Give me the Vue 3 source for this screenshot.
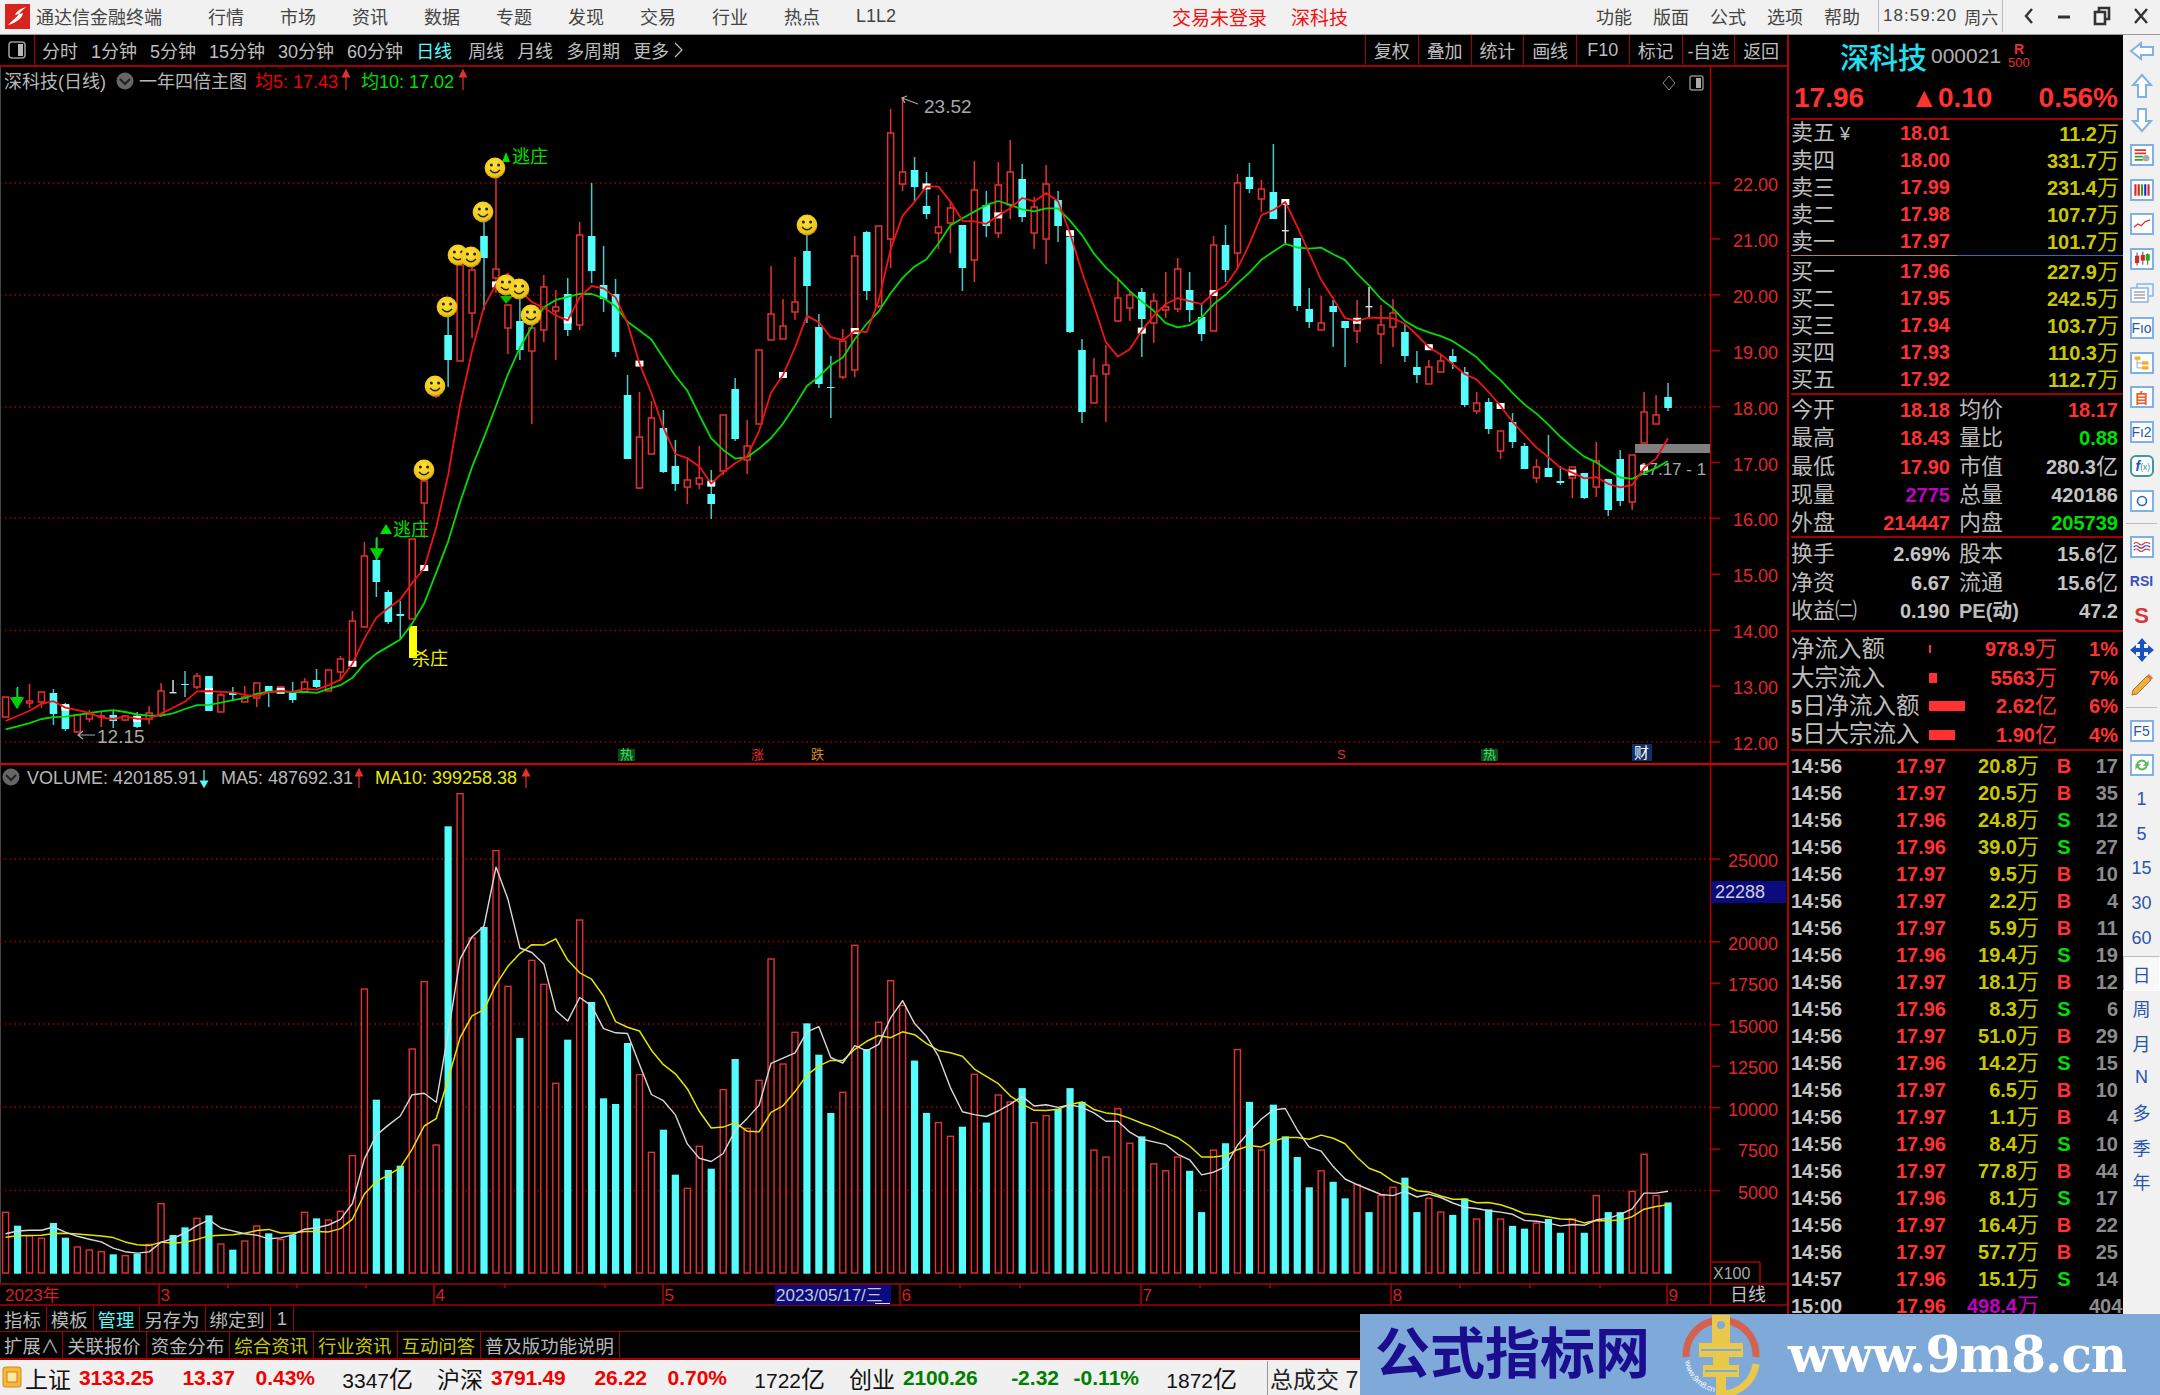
<template>
  <div class="app">
    <div class="menubar">
      <svg class="logo" viewBox="0 0 25 25" width="25" height="25">
        <rect width="25" height="25" fill="#d9231f" />
        <path d="M21 3 C15 5 12 7 10 11 L14 10 C12 13 8 16 3 21 C10 19 17 15 18 9 L14 10 C16 7 19 5 21 3Z" fill="#fff" />
      </svg>
      <span class="app-title">通达信金融终端</span>
      <div class="menu-items">
        <span v-for="m in menus" :key="m">{{ m }}</span>
      </div>
      <span class="login">交易未登录</span>
      <span class="login-stock">深科技</span>
      <div class="menu-right">
        <span v-for="m in rightMenus" :key="m">{{ m }}</span>
      </div>
      <div class="clock"><span class="clock-time">18:59:20</span><span>周六</span></div>
      <div class="win-btns">
        <svg width="12" height="20" viewBox="0 0 12 20"><path d="M9 3 L3 10 L9 17" fill="none" stroke="#333" stroke-width="2.4" /></svg>
        <svg width="14" height="20" viewBox="0 0 14 20"><path d="M1 11h12" stroke="#333" stroke-width="3" /></svg>
        <svg width="18" height="20" viewBox="0 0 18 20"><path d="M6 5V2h10v11h-4M2 6h10v12H2z" fill="none" stroke="#333" stroke-width="2.6" /></svg>
        <svg width="16" height="20" viewBox="0 0 16 20"><path d="M2 3 L14 17 M14 3 L2 17" stroke="#333" stroke-width="2.4" /></svg>
      </div>
    </div>

    <div class="body">
      <div class="left">
        <div class="toolbar">
          <div class="tb-icon">
            <svg width="18" height="18" viewBox="0 0 18 18">
              <rect x="1" y="1" width="16" height="16" rx="3" fill="none" stroke="#999" stroke-width="1.6" />
              <rect x="10" y="3" width="5" height="12" fill="#bbb" />
            </svg>
          </div>
          <span v-for="t in periods" :key="t" class="tb-item" :class="{ active: t === '日线' }">{{ t }}</span>
          <span class="tb-item">更多</span>
          <svg class="tb-more" width="9" height="16" viewBox="0 0 9 16"><path d="M1 1 L8 8 L1 15" fill="none" stroke="#bdbdbd" stroke-width="1.3" /></svg>
          <div class="tb-right">
            <span v-for="b in tbButtons" :key="b">{{ b }}</span>
          </div>
        </div>

        <svg class="pane" viewBox="0 67 1787 696" width="1787" height="696">
          <defs>
            <radialGradient id="smile" cx="45%" cy="35%" r="70%">
              <stop offset="0%" stop-color="#ffe23a" />
              <stop offset="75%" stop-color="#efc416" />
              <stop offset="100%" stop-color="#a88410" />
            </radialGradient>
          </defs>
          <line v-for="y in priceGrid" :key="y" x1="0" :y1="y" x2="1710" :y2="y" class="dots" />
          <line x1="0.5" y1="67" x2="0.5" y2="763" stroke="#444" />
          <line x1="1710.5" y1="67" x2="1710.5" y2="763" class="axis" />
          <g v-for="t in priceTicks" :key="t.label">
            <line x1="1711" :y1="t.y" x2="1720" :y2="t.y" class="axis" />
            <text x="1778" :y="t.y + 8" text-anchor="end" class="axis-text">{{ t.label }}</text>
          </g>

          <text x="1639" y="475" class="gray-text mid">17.17 - 1</text>

          <g v-for="c in candles" :key="c.i">
            <line v-if="c.type !== 'c'" :x1="c.x" :y1="c.hi" :x2="c.x" :y2="c.top" :class="'wick-' + c.type" />
            <line v-if="c.type !== 'c'" :x1="c.x" :y1="c.bot" :x2="c.x" :y2="c.lo" :class="'wick-' + c.type" />
            <line v-if="c.type === 'c'" :x1="c.x" :y1="c.hi" :x2="c.x" :y2="c.lo" class="wick-c" />
            <rect v-if="c.type === 'c'" :x="c.x - 3.8" :y="c.top" width="7.6" :height="c.bot - c.top" fill="#54fcfc" />
            <rect v-else-if="c.type === 'r'" :x="c.x - 3" :y="c.top" width="6" :height="c.bot - c.top" fill="#000" stroke="#e83030" stroke-width="1.5" />
            <rect v-else :x="c.x - 3.5" :y="c.top" width="7" height="1.4" fill="#ddd" />
          </g>

          <rect x="409" y="626" width="8" height="32" fill="#ffff00" />
          <rect x="1635" y="444" width="75" height="9" fill="#808080" />
          <rect v-for="m in ma5Marks" :key="m.x" :x="m.x - 4" :y="m.y - 3" width="8" height="6" fill="#fff" />
          <polyline :points="mainMa10" class="ma-green" />
          <polyline :points="mainMa5" class="ma-red" />

          <!-- signal marks -->
          <path d="M17 688v10M11 698h12l-6 10z" fill="#00d000" stroke="#00d000" stroke-width="1.4" />
          <path d="M377 537v12M371 549h12l-6 10z" fill="#00d000" stroke="#00d000" stroke-width="1.4" />
          <polygon points="380,534 392,534 386,524" fill="#00e000" />
          <polygon points="502,162 510,162 506,152" fill="#00e000" />
          <polygon points="500,296 513,296 506,304" fill="#00c000" />
          <text x="393" y="536" class="sig-green">逃庄</text>
          <text x="512" y="163" class="sig-green">逃庄</text>
          <text x="412" y="665" class="sig-yellow">杀庄</text>

          <g v-for="s in smileys" :key="s[0]" :transform="`translate(${s[0]} ${s[1]})`">
            <circle r="10.4" fill="url(#smile)" />
            <circle cx="-3.6" cy="-3" r="1.5" fill="#222" />
            <circle cx="3.6" cy="-3" r="1.5" fill="#222" />
            <path d="M-5 2 Q0 7.5 5 2" fill="none" stroke="#222" stroke-width="1.4" />
          </g>

          <!-- extreme prices -->
          <path d="M918 104 L902 98 M907 96 L902 98 L905 103" fill="none" stroke="#aaa" stroke-width="1.2" />
          <text x="924" y="113" class="gray-text">23.52</text>
          <path d="M95 735 H78 M83 731 L78 735 L83 739" fill="none" stroke="#aaa" stroke-width="1.2" />
          <text x="97" y="743" class="gray-text">12.15</text>

          <!-- legend -->
          <text x="4" y="88" class="legend gray">深科技(日线)</text>
          <circle cx="125" cy="81" r="8.5" fill="#666" />
          <path d="M120 79 L125 84 L130 79" fill="none" stroke="#222" stroke-width="2" />
          <text x="139" y="88" class="legend gray">一年四倍主图</text>
          <text x="255" y="88" class="legend" fill="#f00000">均5: 17.43</text>
          <path d="M346 90V72M342.5 77L346 70L349.5 77Z" fill="#e83030" stroke="#e83030" stroke-width="1.2" />
          <text x="361" y="88" class="legend" fill="#00e000">均10: 17.02</text>
          <path d="M463 90V72M459.5 77L463 70L466.5 77Z" fill="#e83030" stroke="#e83030" stroke-width="1.2" />
          <path d="M1669 76 L1675 83 L1669 90 L1663 83Z" fill="none" stroke="#888" />
          <rect x="1690" y="76" width="13" height="14" rx="2" fill="none" stroke="#888" stroke-width="1.5" />
          <rect x="1696" y="78" width="5" height="10" fill="#aaa" />

          <!-- event flags -->
          <g class="flags">
            <rect x="618" y="749" width="17" height="12" fill="#0b4a1c" />
            <text x="620" y="759" fill="#40e060">热</text>
            <text x="751" y="759" fill="#e83030">涨</text>
            <text x="811" y="759" fill="#d88a30">跌</text>
            <text x="1337" y="759" fill="#e83030">S</text>
            <rect x="1481" y="749" width="17" height="12" fill="#0b4a1c" />
            <text x="1483" y="759" fill="#40e060">热</text>
            <rect x="1632" y="744" width="20" height="17" fill="#10306a" />
            <text x="1634" y="758" fill="#fff" class="flag-big">财</text>
          </g>
        </svg>

        <svg class="pane" viewBox="0 763 1787 520" width="1787" height="520">
          <line x1="0" y1="764" x2="1787" y2="764" class="axis-bright" />
          <line x1="0.5" y1="765" x2="0.5" y2="1283" stroke="#444" />
          <line x1="1710.5" y1="764" x2="1710.5" y2="1283" class="axis" />
          <line v-for="g in volGrid" :key="g" x1="0" :y1="g" x2="1710" :y2="g" class="dots" />
          <g v-for="t in volTicks" :key="t.label">
            <line x1="1711" :y1="t.y" x2="1720" :y2="t.y" class="axis" />
            <text x="1778" :y="t.y + 8" text-anchor="end" class="axis-text">{{ t.label }}</text>
          </g>
          <rect x="1711" y="881" width="75" height="22" fill="#0b0b80" />
          <text x="1715" y="898" class="gray-text small">22288</text>
          <line x1="1711" y1="1262" x2="1760" y2="1262" class="axis" />
          <line x1="1760" y1="1262" x2="1760" y2="1283" class="axis" />
          <text x="1713" y="1279" class="gray-text xsmall">X100</text>

          <g v-for="v in volBars" :key="v.i">
            <rect v-if="v.up" :x="v.x - 3" :y="1273 - v.h" width="6" :height="v.h" fill="#000" stroke="#e83030" stroke-width="1.4" />
            <rect v-else :x="v.x - 3.6" :y="1273 - v.h" width="7.2" :height="v.h + 0.7" fill="#54fcfc" />
          </g>
          <polyline :points="volMa10" class="ma-yellow" />
          <polyline :points="volMa5" class="ma-white" />

          <circle cx="11" cy="777" r="8.5" fill="#666" />
          <path d="M6 775 L11 780 L16 775" fill="none" stroke="#222" stroke-width="2" />
          <text x="27" y="784" class="legend gray">VOLUME: 420185.91</text>
          <path d="M204 770V786M200.5 781L204 787L207.5 781Z" fill="#54fcfc" stroke="#54fcfc" stroke-width="1.2" />
          <text x="221" y="784" class="legend gray">MA5: 487692.31</text>
          <path d="M359 788V771M355.5 776L359 769L362.5 776Z" fill="#e83030" stroke="#e83030" stroke-width="1.2" />
          <text x="375" y="784" class="legend" fill="#e8e800">MA10: 399258.38</text>
          <path d="M526 788V771M522.5 776L526 769L529.5 776Z" fill="#e83030" stroke="#e83030" stroke-width="1.2" />
        </svg>

        <svg class="timeaxis" viewBox="0 1283 1787 23" width="1787" height="23">
          <line x1="0" y1="1284" x2="1787" y2="1284" class="axis" />
          <line x1="0" y1="1305" x2="1787" y2="1305" class="axis" />
          <line x1="1710.5" y1="1283" x2="1710.5" y2="1306" class="axis" />
          <g v-for="t in timeTicks" :key="t.label">
            <line :x1="t.x" y1="1284" :x2="t.x" y2="1305" class="axis" />
            <text :x="t.x + 1.5" y="1301" class="time-text">{{ t.label }}</text>
          </g>
          <line v-for="x in minorTicks" :key="x" :x1="x" y1="1284" :x2="x" y2="1288" class="axis" />
          <text x="5" y="1301" class="time-text">2023年</text>
          <rect x="775" y="1285" width="116" height="20" fill="#0b0b80" />
          <text x="776" y="1301" class="date-text">2023/05/17/三</text>
          <line x1="875" y1="1303.5" x2="890" y2="1303.5" stroke="#ddd" />
          <text x="1730" y="1301" class="axis-name">日线</text>
        </svg>

        <div class="tabs tabs-first">
          <span v-for="t in tabsA" :key="t.text" :class="t.cls">{{ t.text }}</span>
        </div>
        <div class="tabs tabs-second">
          <span v-for="t in tabsB" :key="t.text" :class="t.cls">{{ t.text }}</span>
        </div>
      </div>

      <div class="quote">
        <div class="q-title">
          <span class="q-name">深科技</span>
          <span class="q-code">000021</span>
          <span class="q-tag"><b>R</b><i>500</i></span>
        </div>
        <div class="q-price">
          <span>17.96</span><span>▲0.10</span><span>0.56%</span>
        </div>

        <div class="q-book">
          <div v-for="r in sells" :key="r[0]" class="book-row">
            <span class="lbl">{{ r[0] }}<em v-if="r[0] === '卖五'"> ¥</em></span>
            <span class="num price">{{ r[1] }}</span>
            <span class="book-vol"><span class="num">{{ r[2] }}</span>万</span>
          </div>
        </div>
        <div class="book-sep"></div>
        <div class="q-book buy">
          <div v-for="r in buys" :key="r[0]" class="book-row">
            <span class="lbl">{{ r[0] }}</span>
            <span class="num price">{{ r[1] }}</span>
            <span class="book-vol"><span class="num">{{ r[2] }}</span>万</span>
          </div>
        </div>

        <div class="q-stats">
          <div v-for="r in statsA" :key="r[0]" class="stat-row">
            <div class="stat-cell"><span class="lbl">{{ r[0] }}</span><span class="num" :class="r[2]">{{ r[1] }}</span></div>
            <div class="stat-cell"><span class="lbl">{{ r[3] }}</span><span class="num" :class="r[5]">{{ r[4] }}<span v-if="r[6]" class="unit">{{ r[6] }}</span></span></div>
          </div>
        </div>
        <div class="q-stats second">
          <div v-for="r in statsB" :key="r[0]" class="stat-row">
            <div class="stat-cell"><span class="lbl">{{ r[0] }}</span><span class="num">{{ r[1] }}</span></div>
            <div class="stat-cell"><span class="lbl" :class="{ bolded: r[2].startsWith('PE') }">{{ r[2] }}</span><span class="num">{{ r[3] }}<span v-if="r[4]" class="unit">{{ r[4] }}</span></span></div>
          </div>
        </div>
        <div class="q-flow">
          <div v-for="r in flows" :key="r.label" class="flow-row">
            <span class="lbl flow-lbl"><span v-if="r.five" class="num five">5</span>{{ r.label }}</span>
            <span class="flow-bar"><i :style="{ width: r.bar + 'px', height: r.bar < 3 ? '8px' : '10px' }"></i></span>
            <span class="flow-val num">{{ r.value }}<span class="unit">{{ r.unit }}</span></span>
            <span class="flow-pct num">{{ r.pct }}</span>
          </div>
        </div>
        <div class="q-trades">
          <div v-for="(t, i) in trades" :key="i" class="trade-row">
            <span class="num t-time">{{ t[0] }}</span>
            <span class="num t-price">{{ t[1] }}</span>
            <span class="t-vol" :class="{ big: t[3] === '' }"><span class="num">{{ t[2] }}</span>万</span>
            <span class="num t-side" :class="t[3]">{{ t[3] }}</span>
            <span class="num t-count">{{ t[4] }}</span>
          </div>
        </div>
      </div>

      <div class="sidebar">
        <div class="side"><svg width="26" height="22" viewBox="0 0 26 22"><path d="M2 11 L12 3 V7 H24 V15 H12 V19Z" fill="#fff" stroke="#7fb0e8" stroke-width="2" /></svg></div>
        <div class="side"><svg width="22" height="26" viewBox="0 0 22 26"><path d="M11 2 L20 12 H15 V24 H7 V12 H2Z" fill="#fff" stroke="#7fb0e8" stroke-width="2" /></svg></div>
        <div class="side"><svg width="22" height="26" viewBox="0 0 22 26"><path d="M11 24 L20 14 H15 V2 H7 V14 H2Z" fill="#fff" stroke="#7fb0e8" stroke-width="2" /></svg></div>
        <div class="side"><svg class="box" viewBox="0 0 24 22"><path d="M3 5h14M3 9h14" stroke="#d33" stroke-width="2" /><path d="M3 13h10M3 17h10" stroke="#2a2" stroke-width="2" /><circle cx="17" cy="15" r="4" fill="#aaa" /></svg></div>
        <div class="side"><svg class="box" viewBox="0 0 24 22"><path d="M4 4v14M8 4v14" stroke="#d22" stroke-width="2.6" /><path d="M12 4v14" stroke="#2a2" stroke-width="2.6" /><path d="M16 4v14" stroke="#22c" stroke-width="2.6" /><path d="M20 4v14" stroke="#d22" stroke-width="2.6" /></svg></div>
        <div class="side"><svg class="box" viewBox="0 0 24 22"><path d="M2 15 L7 11 L11 13 L16 8 L22 6" fill="none" stroke="#e03030" stroke-width="1.6" /></svg></div>
        <div class="side"><svg class="box" viewBox="0 0 24 22"><path d="M6 3v16M13 2v16M19 4v14" stroke="#222" /><rect x="3.5" y="7" width="5" height="9" fill="#d22" /><rect x="10.5" y="6" width="5" height="7" fill="#d22" /><rect x="16.5" y="5" width="5" height="8" fill="#2a2" /></svg></div>
        <div class="side"><svg width="26" height="22" viewBox="0 0 26 22"><rect x="8" y="2" width="16" height="12" fill="#eef5ff" stroke="#7fb0e8" stroke-width="1.4" /><rect x="2" y="6" width="17" height="14" fill="#fff" stroke="#7fb0e8" stroke-width="1.4" /><path d="M5 10h11M5 13h11M5 16h11" stroke="#777" /></svg></div>
        <div class="side"><div class="txtbox">Fıo</div></div>
        <div class="side"><svg class="box" viewBox="0 0 24 22"><rect x="3" y="3" width="7" height="4" fill="#f0b020" /><rect x="12" y="9" width="8" height="4" fill="#f0b020" /><rect x="12" y="15" width="8" height="4" fill="#f0b020" /><path d="M6 7v10h6M6 11h6" fill="none" stroke="#999" /></svg></div>
        <div class="side"><div class="txtbox red">自</div></div>
        <div class="side"><div class="txtbox">Fı2</div></div>
        <div class="side"><svg class="box round" viewBox="0 0 24 22"><text x="4" y="17" class="fx">f</text><text x="10" y="16" class="fx2">(x)</text></svg></div>
        <div class="side"><svg class="box" viewBox="0 0 24 22"><circle cx="12" cy="11" r="5.5" fill="none" stroke="#2a66c8" stroke-width="2" /></svg></div>
        <div class="side-div"></div>
        <div class="side"><svg class="box" viewBox="0 0 24 22"><path d="M2 7 Q5 4 8 7 T14 7 T22 7" fill="none" stroke="#d33" stroke-width="1.4" /><path d="M2 11 Q5 8 8 11 T14 11 T22 11" fill="none" stroke="#33c" stroke-width="1.4" /><path d="M2 15 Q5 12 8 15 T14 15 T22 15" fill="none" stroke="#d33" stroke-width="1.4" /></svg></div>
        <div class="side"><span class="rsi">RSI</span></div>
        <div class="side"><span class="dollar">S</span></div>
        <div class="side"><svg width="26" height="26" viewBox="0 0 26 26"><path d="M13 1 L18 7 H15 V11 H19 V8 L25 13 L19 18 V15 H15 V19 H18 L13 25 L8 19 H11 V15 H7 V18 L1 13 L7 8 V11 H11 V7 H8Z" fill="#1a4fc0" /></svg></div>
        <div class="side"><svg width="26" height="26" viewBox="0 0 26 26"><path d="M4 18 L18 4 L22 8 L8 22 L3 23Z" fill="#f0b040" stroke="#a07020" /><path d="M18 4 L22 8 L24 6 L20 2Z" fill="#e87060" /></svg></div>
        <div class="side-div"></div>
        <div class="side"><div class="txtbox">F5</div></div>
        <div class="side"><svg class="box" viewBox="0 0 24 22"><path d="M5 10 A7 7 0 0 1 18 8 L20 5 V12 H13 L16 9 A5 5 0 0 0 7 11Z" fill="#5bb85b" /><path d="M19 12 A7 7 0 0 1 6 14 L4 17 V10 H11 L8 13 A5 5 0 0 0 17 11Z" fill="#5bb85b" /></svg></div>
        <div v-for="p in sidePeriods" :key="p" class="side side-text" :class="{ current: p === '日' }">{{ p }}</div>
      </div>
    </div>

    <div class="statusbar">
      <svg class="status-icon" width="20" height="24" viewBox="0 0 20 24">
        <rect x="1" y="2" width="18" height="20" rx="2" fill="#f5b83c" stroke="#d68a10" />
        <rect x="5" y="7" width="10" height="10" fill="#ffe9a0" stroke="#c98010" />
      </svg>
      <div v-for="x in indexes" :key="x.name" class="idx">
        <span class="idx-name">{{ x.name }}</span>
        <span class="idx-val" :class="x.cls">{{ x.value }}</span>
        <span class="idx-delta" :class="x.cls">{{ x.delta }}</span>
        <span class="idx-pct" :class="x.cls">{{ x.pct }}</span>
        <span class="idx-amt">{{ x.amt }}<span class="yi">亿</span></span>
      </div>
      <div class="status-total">总成交 7</div>
    </div>

    <div class="watermark">
      <span class="wm-title">公式指标网</span>
      <svg class="wm-logo" width="80" height="84" viewBox="-40 -42 80 84">
        <defs><path id="wmArc" d="M-36 6 A36 36 0 0 0 -6 37" /></defs>
        <path d="M-35 2 A35 35 0 0 1 -8 -34" fill="none" stroke="#d4624e" stroke-width="7" />
        <path d="M8 -34 A35 35 0 0 1 35 2" fill="none" stroke="#d4624e" stroke-width="7" />
        <path d="M35 9 A35 35 0 0 1 4 39" fill="none" stroke="#eac94a" stroke-width="7" />
        <path d="M-9 -40 H9 V-12 H22 V2 H8 V10 H18 V22 H5 V40 H-5 V22 H-18 V10 H-8 V2 H-22 V-12 H-9Z" fill="#eac94a" />
        <circle cx="0" cy="-30" r="4" fill="#7fa9d9" />
        <path d="M-20 -5 H20 M-16 16 H16" stroke="#7fa9d9" stroke-width="2" />
        <text class="wm-small"><textPath href="#wmArc">www.9m8.cn</textPath></text>
      </svg>
      <span class="wm-url">www.9m8.cn</span>
    </div>
  </div>
</template>

<script setup>
import { computed } from 'vue'

const menus = ['行情', '市场', '资讯', '数据', '专题', '发现', '交易', '行业', '热点', 'L1L2']
const rightMenus = ['功能', '版面', '公式', '选项', '帮助']
const periods = ['分时', '1分钟', '5分钟', '15分钟', '30分钟', '60分钟', '日线', '周线', '月线', '多周期']
const tbButtons = ['复权', '叠加', '统计', '画线', 'F10', '标记', '-自选', '返回']
const sidePeriods = ['1', '5', '15', '30', '60', '日', '周', '月', 'N', '多', '季', '年']

const tabsA = [
  { text: '指标' }, { text: '模板' }, { text: '管理', cls: 'on' },
  { text: '另存为' }, { text: '绑定到' }, { text: '1', cls: 'one' },
]
const tabsB = [
  { text: '扩展∧', cls: 'ext' }, { text: '关联报价' }, { text: '资金分布' },
  { text: '综合资讯', cls: 'hl' }, { text: '行业资讯', cls: 'hl' }, { text: '互动问答', cls: 'hl' },
  { text: '普及版功能说明' },
]

const sells = [
  ['卖五', '18.01', '11.2'], ['卖四', '18.00', '331.7'], ['卖三', '17.99', '231.4'],
  ['卖二', '17.98', '107.7'], ['卖一', '17.97', '101.7'],
]
const buys = [
  ['买一', '17.96', '227.9'], ['买二', '17.95', '242.5'], ['买三', '17.94', '103.7'],
  ['买四', '17.93', '110.3'], ['买五', '17.92', '112.7'],
]
const statsA = [
  ['今开', '18.18', 'red', '均价', '18.17', 'red'],
  ['最高', '18.43', 'red', '量比', '0.88', 'green'],
  ['最低', '17.90', 'red', '市值', '280.3', '', '亿'],
  ['现量', '2775', 'purple', '总量', '420186', ''],
  ['外盘', '214447', 'red', '内盘', '205739', 'green'],
]
const statsB = [
  ['换手', '2.69%', '股本', '15.6', '亿'],
  ['净资', '6.67', '流通', '15.6', '亿'],
  ['收益㈡', '0.190', 'PE(动)', '47.2', ''],
]
const flows = [
  { label: '净流入额', bar: 2, value: '978.9', unit: '万', pct: '1%' },
  { label: '大宗流入', bar: 8, value: '5563', unit: '万', pct: '7%' },
  { label: '日净流入额', five: true, bar: 36, value: '2.62', unit: '亿', pct: '6%' },
  { label: '日大宗流入', five: true, bar: 26, value: '1.90', unit: '亿', pct: '4%' },
]
const tradeSeed = [
  ['17.97', '20.8', 'B', 17], ['17.97', '20.5', 'B', 35], ['17.96', '24.8', 'S', 12],
  ['17.96', '39.0', 'S', 27], ['17.97', '9.5', 'B', 10], ['17.97', '2.2', 'B', 4],
  ['17.97', '5.9', 'B', 11], ['17.96', '19.4', 'S', 19], ['17.97', '18.1', 'B', 12],
  ['17.96', '8.3', 'S', 6], ['17.97', '51.0', 'B', 29], ['17.96', '14.2', 'S', 15],
  ['17.97', '6.5', 'B', 10], ['17.97', '1.1', 'B', 4], ['17.96', '8.4', 'S', 10],
  ['17.97', '77.8', 'B', 44], ['17.96', '8.1', 'S', 17], ['17.97', '16.4', 'B', 22],
  ['17.97', '57.7', 'B', 25],
]
const trades = [
  ...tradeSeed.map((t) => ['14:56', ...t]),
  ['14:57', '17.96', '15.1', 'S', 14],
  ['15:00', '17.96', '498.4', '', 404],
]

const indexes = [
  { name: '上证', value: '3133.25', delta: '13.37', pct: '0.43%', amt: '3347', cls: 'up' },
  { name: '沪深', value: '3791.49', delta: '26.22', pct: '0.70%', amt: '1722', cls: 'up' },
  { name: '创业', value: '2100.26', delta: '-2.32', pct: '-0.11%', amt: '1872', cls: 'down' },
]

// candles read off the chart, in screen y: top, bottom, high, low, type
const raw = [
  [697,717,697,717,'r'],[697,702,687,708,'c'],[701,703,684,708,'r'],[692,702,692,708,'r'],[693,714,689,725,'c'],
  [704,729,703,731,'c'],[715,732,715,732,'r'],[714,719,710,722,'r'],[716,717,712,727,'r'],[715,721,711,728,'c'],
  [716,720,715,721,'r'],[717,727,712,728,'c'],[713,719,706,724,'r'],[691,715,683,717,'r'],[692,693,680,693,'w'],
  [684,685,671,697,'c'],[676,687,673,689,'r'],[676,711,676,711,'c'],[695,712,693,712,'r'],[693,695,687,700,'c'],
  [697,702,686,702,'r'],[683,698,683,707,'r'],[686,692,686,707,'c'],[687,691,686,692,'r'],[691,700,682,703,'c'],
  [682,692,678,692,'r'],[680,687,669,688,'c'],[670,691,670,691,'r'],[659,672,656,680,'r'],[621,665,611,665,'r'],
  [556,627,542,627,'r'],[560,582,538,597,'c'],[592,622,590,624,'c'],[614,616,601,639,'c'],[539,619,539,619,'r'],
  [481,503,470,538,'r'],[380,396,376,398,'r'],[335,360,317,387,'c'],[265,361,265,361,'r'],[270,313,265,338,'r'],
  [236,258,222,310,'c'],[269,278,178,293,'r'],[305,328,305,354,'r'],[321,350,293,360,'c'],[328,351,328,424,'r'],
  [287,330,275,342,'r'],[307,311,290,360,'r'],[294,330,278,336,'c'],[235,325,222,330,'r'],[236,271,183,283,'c'],
  [285,299,246,312,'c'],[294,352,279,357,'c'],[395,459,375,459,'c'],[437,488,392,489,'r'],[418,454,401,454,'r'],
  [428,472,410,473,'c'],[466,484,440,491,'c'],[480,487,458,504,'r'],[478,484,446,489,'r'],[494,504,470,519,'c'],
  [415,471,415,475,'r'],[389,439,378,441,'c'],[446,460,420,474,'r'],[350,424,350,424,'r'],[314,340,266,340,'r'],
  [326,339,299,339,'r'],[302,312,257,320,'r'],[251,286,235,323,'c'],[327,384,314,388,'c'],[387,388,356,418,'c'],
  [341,377,329,379,'r'],[256,370,236,377,'r'],[232,291,231,300,'c'],[226,306,226,308,'r'],[133,239,109,268,'r'],
  [172,184,97,191,'r'],[170,187,157,201,'c'],[206,214,172,219,'c'],[227,233,195,249,'r'],[208,223,202,253,'r'],
  [225,268,225,291,'c'],[190,260,161,282,'r'],[205,226,191,237,'c'],[185,233,162,238,'r'],[172,205,140,219,'r'],
  [179,217,164,222,'c'],[207,233,197,249,'r'],[184,239,165,264,'r'],[200,226,191,242,'c'],[237,332,232,333,'c'],
  [350,412,339,423,'c'],[376,403,358,403,'r'],[365,374,345,422,'r'],[298,321,277,322,'r'],[295,308,291,321,'r'],
  [292,319,288,357,'c'],[301,323,293,343,'r'],[307,310,272,318,'r'],[269,309,258,312,'r'],[290,310,272,322,'c'],
  [317,334,303,341,'c'],[245,331,236,331,'r'],[245,270,225,282,'c'],[183,253,174,270,'r'],[177,189,163,193,'c'],
  [189,199,180,212,'r'],[192,219,144,219,'c'],[230,231,201,243,'w'],[238,306,238,311,'c'],[309,322,288,328,'c'],
  [323,330,296,330,'r'],[306,312,300,347,'c'],[321,328,321,367,'c'],[319,331,300,343,'r'],[306,307,287,317,'w'],
  [325,334,305,364,'r'],[313,327,299,347,'r'],[332,356,324,362,'c'],[367,375,351,383,'c'],[367,384,360,384,'r'],
  [361,372,355,372,'r'],[356,362,349,369,'c'],[372,405,367,407,'c'],[403,411,392,414,'r'],[402,429,398,434,'c'],
  [431,451,431,459,'r'],[422,442,413,448,'c'],[446,469,443,469,'c'],[467,478,459,483,'r'],[468,477,435,477,'c'],
  [481,483,466,485,'c'],[467,478,467,498,'r'],[473,498,473,499,'c'],[461,487,442,497,'r'],[479,510,479,516,'c'],
  [459,501,450,506,'c'],[455,502,455,510,'r'],[412,443,392,443,'r'],[415,424,395,424,'r'],[397,408,383,411,'c'],
]

const barX = (i) => 5.6 + 11.96 * i

const candles = raw.map((c, i) => ({
  i,
  x: barX(i),
  top: c[0],
  bot: c[1],
  hi: c[2],
  lo: c[3],
  type: c[4],
}))

const closes = candles.map((c) => (c.type === 'c' ? c.bot : c.top))

function movingAvg(values, n, pad) {
  return values.map((_, i) => {
    let sum = 0
    for (let j = i - n + 1; j <= i; j++) sum += j >= 0 ? values[j] : pad
    return sum / n
  })
}

const toPoints = (ys) => ys.map((y, i) => `${barX(i).toFixed(1)},${y.toFixed(1)}`).join(' ')

const ma5 = movingAvg(closes, 5, 727)
const ma10 = movingAvg(closes, 10, 733)
const mainMa5 = computed(() => toPoints(ma5))
const mainMa10 = computed(() => toPoints(ma10))
const ma5Marks = ma5.map((y, i) => ({ x: barX(i), y, i })).filter((m) => m.i % 6 === 5)

const smileys = [
  [424, 470], [435, 386], [447, 307], [458, 255], [471, 257], [483, 212], [495, 168],
  [506, 285], [519, 289], [531, 315], [807, 225],
]

const priceGrid = [183, 295, 407, 518, 630.5, 742]
const priceTicks = [22, 21, 20, 19, 18, 17, 16, 15, 14, 13, 12].map((p, i) => ({
  label: p.toFixed(2),
  y: 183 + i * 55.9,
}))

// volume bars: first part as tops in zoom rows, the rest as tops on the small picture
const volTopsA = [
  1268,1308,1338,1346,1300,1344,1372,1381,1386,1394,1398,1392,1364,1242,1336,1313,1286,1277,1363,1380,
  1354,1309,1331,1350,1335,1268,1286,1291,1265,1098,598,930,1141,1128,778,576,1066,110,12,445,
  412,183,590,745,512,584,881,750,391,637,926,943,760,855,1088,1020,1155,1196,1070,1137,
  900,808,1016,872,508,823,728,701,795,970,908,467,778,698,
]
const volTopsB = [
  712,730,770,808,815,825,818,780,815,795,800,790,815,810,805,790,800,835,840,805,
  830,825,845,850,840,850,880,835,830,762,800,835,802,825,840,862,850,858,870,860,
  880,868,862,855,880,870,880,882,870,885,878,885,890,892,888,885,895,885,895,868,
  880,880,865,838,868,873,
]
const volHeights = [
  ...volTopsA.map((z) => (1450 - z) / 3),
  ...volTopsB.map((t) => (924.2 - t) * 1.3776),
]
const volBars = volHeights.map((h, i) => ({ i, x: barX(i), h, up: raw[i][4] === 'r' }))
const volYs = (n, pad) => movingAvg(volHeights, n, pad).map((h) => 1273 - h)
const volMa5 = computed(() => toPoints(volYs(5, 34)))
const volMa10 = computed(() => toPoints(volYs(10, 33)))
const volGrid = [859, 941.5, 1024, 1107, 1190.5]
const volTicks = [25000, 20000, 17500, 15000, 12500, 10000, 7500, 5000].map((v) => ({
  label: String(v),
  y: 1273.5 - v * 0.01658,
}))

const timeTicks = [
  { label: '3', x: 159 }, { label: '4', x: 434 }, { label: '5', x: 663 },
  { label: '6', x: 900 }, { label: '7', x: 1141 }, { label: '8', x: 1391 }, { label: '9', x: 1667 },
]
const minorTicks = [228, 297, 366, 505, 605, 960, 1020, 1200, 1270, 1460, 1530, 1600]
</script>

<style scoped>
.app {
  position: relative;
  width: 2160px;
  height: 1395px;
  overflow: hidden;
  display: flex;
  flex-direction: column;
  background: #000;
  color: #c0c0c0;
  font-family: "Liberation Sans", "Noto Sans CJK SC", sans-serif;
}

.menubar {
  height: 32px;
  padding-bottom: 2px;
  flex-shrink: 0;
  display: flex;
  align-items: center;
  padding-left: 5px;
  background: #f1f1f1;
  border-bottom: 1px solid #9a9a9a;
  color: #444;
  font-size: 18px;
}

.app-title {
  margin-left: 6px;
  width: 126px;
}

.menu-items {
  display: flex;
  align-items: center;
  gap: 36px;
  margin-left: 46px;
}

.login {
  margin-left: 276px;
  color: #f01010;
  font-size: 19px;
}

.login-stock {
  margin-left: 24px;
  color: #f01010;
  font-size: 19px;
}

.menu-right {
  display: flex;
  gap: 21px;
  margin-left: 248px;
}

.clock {
  display: flex;
  align-items: center;
  gap: 7px;
  height: 32px;
  margin-left: 18px;
  padding: 0 4px;
  border-left: 1px solid #bbb;
  border-right: 1px solid #bbb;
  font-size: 17px;
  white-space: nowrap;
}

.clock-time {
  letter-spacing: 1px;
}

.win-btns {
  display: flex;
  align-items: center;
  gap: 22px;
  margin-left: 20px;
}

.body {
  flex: 1;
  display: flex;
  min-height: 0;
}

.left {
  width: 1787px;
  display: flex;
  flex-direction: column;
}

.toolbar {
  height: 30px;
  display: flex;
  align-items: center;
  border-bottom: 2px solid #a00000;
  font-size: 18px;
  color: #bdbdbd;
}

.tb-icon {
  width: 34px;
  height: 30px;
  display: flex;
  align-items: center;
  justify-content: center;
  border-right: 1px solid #a00000;
  margin-right: 7px;
  flex-shrink: 0;
}

.tb-item {
  margin-right: 13px;
  white-space: nowrap;
}

.tb-item.active {
  color: #54fcfc;
  margin-right: 16px;
}

.tb-more {
  margin-left: -8px;
  flex-shrink: 0;
}

.tb-right {
  margin-left: auto;
  display: flex;
  height: 30px;
}

.tb-right span {
  width: 52.75px;
  box-sizing: border-box;
  display: flex;
  align-items: center;
  justify-content: center;
  border-left: 1px solid #a00000;
}

.pane,
.timeaxis {
  display: block;
  flex-shrink: 0;
}

.dots {
  stroke: #a00000;
  stroke-width: 1.4;
  stroke-dasharray: 1.5 3.3;
}

.axis {
  stroke: #a80000;
  stroke-width: 1.6;
}

.axis-bright {
  stroke: #d80000;
  stroke-width: 2;
}

.axis-text {
  font-size: 18px;
  fill: #e02828;
}

.wick-r {
  stroke: #e83030;
  stroke-width: 1.5;
}

.wick-c {
  stroke: #46c8cc;
  stroke-width: 1.5;
}

.wick-w {
  stroke: #ddd;
  stroke-width: 1.5;
}

.ma-red,
.ma-green,
.ma-white,
.ma-yellow {
  fill: none;
  stroke-width: 1.8;
  stroke-linejoin: round;
}

.ma-red {
  stroke: #f01414;
}

.ma-green {
  stroke: #00dc00;
}

.ma-white {
  stroke: #d8d8d8;
  stroke-width: 1.4;
}

.ma-yellow {
  stroke: #e4e400;
  stroke-width: 1.5;
}

.sig-green {
  font-size: 18px;
  fill: #00e000;
}

.sig-yellow {
  font-size: 18px;
  fill: #f0f000;
}

.gray-text {
  font-size: 19px;
  fill: #a8a8a8;
}

.gray-text.mid {
  font-size: 17px;
}

.gray-text.small {
  font-size: 18px;
  fill: #d0d0d0;
}

.gray-text.xsmall {
  font-size: 16px;
}

.legend {
  font-size: 18px;
}

.legend.gray {
  fill: #b8b8b8;
}

.flags text {
  font-size: 13px;
}

.flags .flag-big {
  font-size: 15px;
}

.time-text {
  font-size: 17px;
  fill: #d42020;
}

.date-text {
  font-size: 17px;
  fill: #c8c8c8;
}

.axis-name {
  font-size: 18px;
  fill: #c0c0c0;
}

.tabs {
  display: flex;
  font-size: 18.4px;
  color: #b8b8b8;
  white-space: nowrap;
}

.tabs span {
  display: flex;
  align-items: center;
  padding: 0 5px 0 4px;
  border-right: 1px solid #a00000;
}

.tabs span.one {
  padding: 0 6px;
}

.tabs span.ext {
  padding-right: 3px;
}

.tabs-first {
  height: 26px;
  box-sizing: border-box;
  border-bottom: 1px solid #a00000;
}

.tabs-second {
  height: 26px;
  border-bottom: 2px solid #a00000;
}

.tabs .on {
  color: #54fcfc;
}

.tabs .hl {
  color: #c8c800;
}

.quote {
  width: 336px;
  box-sizing: border-box;
  border-left: 2px solid #b00000;
  padding-left: 2px;
  font-size: 22px;
  display: flex;
  flex-direction: column;
  overflow: hidden;
}

.num {
  font-size: 20px;
  font-weight: 700;
}

.lbl {
  color: #bcbcbc;
  white-space: nowrap;
}

.lbl em {
  font-style: normal;
  font-size: 18px;
}

.q-title {
  height: 41px;
  flex-shrink: 0;
  display: flex;
  align-items: center;
  padding-left: 49px;
}

.q-name {
  font-size: 29px;
  font-weight: 500;
  color: #20e0f0;
}

.q-code {
  margin-left: 4px;
  font-size: 21px;
  color: #b0b0b0;
}

.q-tag {
  margin-left: 7px;
  display: flex;
  flex-direction: column;
  align-items: center;
  line-height: 14px;
  color: #e83030;
  font-size: 14px;
}

.q-tag i {
  font-style: normal;
  font-size: 13px;
}

.q-price {
  height: 44px;
  flex-shrink: 0;
  display: flex;
  justify-content: space-between;
  align-items: center;
  padding: 2px 5px 0 3px;
  box-sizing: border-box;
  border-bottom: 2px solid #a00000;
  font-size: 28px;
  font-weight: 700;
  color: #ff3232;
}

.q-book {
  height: 135px;
  flex-shrink: 0;
}

.q-book.buy {
  height: 139px;
  padding-top: 2px;
  box-sizing: border-box;
  border-bottom: 2px solid #a00000;
}

.book-row {
  height: 27px;
  display: flex;
  align-items: center;
  line-height: 27px;
}

.book-row .lbl {
  width: 100px;
}

.book-row .price {
  width: 59px;
  text-align: right;
  color: #ff3232;
}

.book-vol {
  margin-left: auto;
  margin-right: 4px;
  color: #c8c800;
}

.book-sep {
  height: 1px;
  flex-shrink: 0;
  background: linear-gradient(90deg, #c08820 50%, #2a70c0 50%);
}

.q-stats {
  padding-top: 1px;
  border-bottom: 2px solid #a00000;
  box-sizing: border-box;
  height: 143px;
  flex-shrink: 0;
}

.q-stats.second {
  height: 94px;
  padding-top: 2px;
}

.stat-row {
  height: 28.25px;
  display: flex;
  align-items: center;
  padding-right: 4px;
}

.q-stats.second .stat-row {
  height: 28.5px;
}

.stat-cell {
  width: 159px;
  display: flex;
  justify-content: space-between;
  align-items: center;
  line-height: 28px;
}

.stat-cell + .stat-cell {
  margin-left: 9px;
}

.stat-cell .num {
  color: #c4c4c4;
}

.stat-cell .num.red {
  color: #ff3232;
}

.stat-cell .num.green {
  color: #00e000;
}

.stat-cell .num.purple {
  color: #c000c0;
}

.bolded {
  font-weight: 700;
  font-size: 20px;
}

.unit {
  font-size: 22px;
  font-weight: 400;
}

.q-flow {
  height: 119px;
  flex-shrink: 0;
  box-sizing: border-box;
  padding-top: 3px;
  border-bottom: 2px solid #a00000;
}

.flow-row {
  height: 28.5px;
  display: flex;
  align-items: center;
  line-height: 28px;
  color: #ff3232;
}

.flow-lbl {
  width: 138px;
  font-size: 23.5px;
}

.five {
  color: #c0c0c0;
}

.flow-bar {
  width: 40px;
  display: flex;
  align-items: center;
}

.flow-bar i {
  display: block;
  background: #ff3232;
}

.flow-val {
  width: 88px;
  flex-shrink: 0;
  text-align: right;
  white-space: nowrap;
}

.flow-pct {
  width: 61px;
  text-align: right;
}

.q-trades {
  flex: 1;
  padding-top: 1.5px;
}

.trade-row {
  height: 27px;
  display: flex;
  align-items: center;
  line-height: 27px;
}

.t-time {
  width: 99px;
  color: #c4c4c4;
}

.t-price {
  width: 56px;
  text-align: right;
  color: #ff3232;
}

.t-vol {
  width: 93px;
  flex-shrink: 0;
  text-align: right;
  color: #c8c800;
  white-space: nowrap;
}

.t-vol.big {
  color: #c000c0;
}

.t-side {
  width: 50px;
  text-align: center;
}

.t-side.B {
  color: #ff3232;
}

.t-side.S {
  color: #00e000;
}

.t-count {
  width: 29px;
  text-align: right;
  color: #8c8c8c;
}

.sidebar {
  width: 37px;
  flex-shrink: 0;
  background: #f1f1f1;
}

.side {
  height: 34.6px;
  display: flex;
  align-items: center;
  justify-content: center;
}

.sidebar > .side:first-child {
  margin-top: -1px;
}

.box {
  width: 24px;
  height: 22px;
  background: #fff;
  border: 2px solid #7fb0e8;
  box-sizing: border-box;
}

.round {
  border-radius: 6px;
  border-color: #3a9a9a;
}

.fx {
  font-size: 17px;
  font-style: italic;
  font-weight: 700;
  fill: #1a4fc0;
}

.fx2 {
  font-size: 10px;
  fill: #2a8a8a;
}

.txtbox {
  width: 24px;
  height: 22px;
  box-sizing: border-box;
  border: 2px solid #7fb0e8;
  background: #fff;
  display: flex;
  align-items: center;
  justify-content: center;
  font-size: 14px;
  color: #2a56a8;
}

.txtbox.red {
  color: #e8602a;
  font-weight: 700;
}

.rsi {
  font-size: 14px;
  font-weight: 700;
  color: #3a50c0;
}

.dollar {
  font-size: 22px;
  font-weight: 700;
  color: #d83a3a;
}

.side-div {
  height: 11px;
  display: flex;
  align-items: center;
  margin: 0 3px;
}

.side-div::after {
  content: "";
  width: 100%;
  height: 1px;
  background: #bbb;
}

.side-text {
  font-size: 18px;
  color: #2a56a8;
}

.side-text.current {
  background: #f8f8f8;
  border: 1px solid #bbb;
  border-right-color: #fff;
  border-bottom-color: #fff;
  box-sizing: border-box;
  margin-top: 1px;
}

.statusbar {
  height: 35px;
  flex-shrink: 0;
  display: flex;
  align-items: center;
  padding-left: 25px;
  position: relative;
  background: #f0f0f0;
  color: #111;
  font-size: 21px;
  white-space: nowrap;
}

.status-icon {
  position: absolute;
  left: 2px;
  top: 5px;
}

.idx {
  display: flex;
  align-items: center;
  margin-right: 24px;
}

.idx-name {
  width: 54px;
  font-size: 23px;
}

.idx-val {
  width: 76px;
  letter-spacing: -0.2px;
}

.idx-delta,
.idx-pct {
  width: 80px;
  text-align: right;
}

.idx-amt {
  width: 98px;
  text-align: right;
}

.yi {
  font-size: 24px;
}

.up {
  color: #f00000;
  font-weight: 700;
}

.down {
  color: #008000;
  font-weight: 700;
}

.status-total {
  margin-left: 6px;
  padding-left: 2px;
  border-left: 1px solid #999;
  font-size: 23px;
  color: #222;
}

.watermark {
  position: absolute;
  left: 1360px;
  top: 1314px;
  width: 800px;
  height: 81px;
  display: flex;
  align-items: center;
  background: #7fa9d9;
}

.wm-title {
  margin-left: 15px;
  width: 280px;
  font-size: 55px;
  font-weight: 700;
  line-height: 1;
  color: #1a0d8e;
  white-space: nowrap;
}

.wm-logo {
  margin-left: 26px;
  flex-shrink: 0;
}

.wm-small {
  font-size: 8px;
  fill: #fff;
}

.wm-url {
  margin-left: 27px;
  font-family: "DejaVu Serif", serif;
  font-size: 50px;
  font-weight: 700;
  letter-spacing: -1px;
  color: #fff;
  white-space: nowrap;
}
</style>

<style>
html,
body {
  margin: 0;
  background: #000;
}
</style>
